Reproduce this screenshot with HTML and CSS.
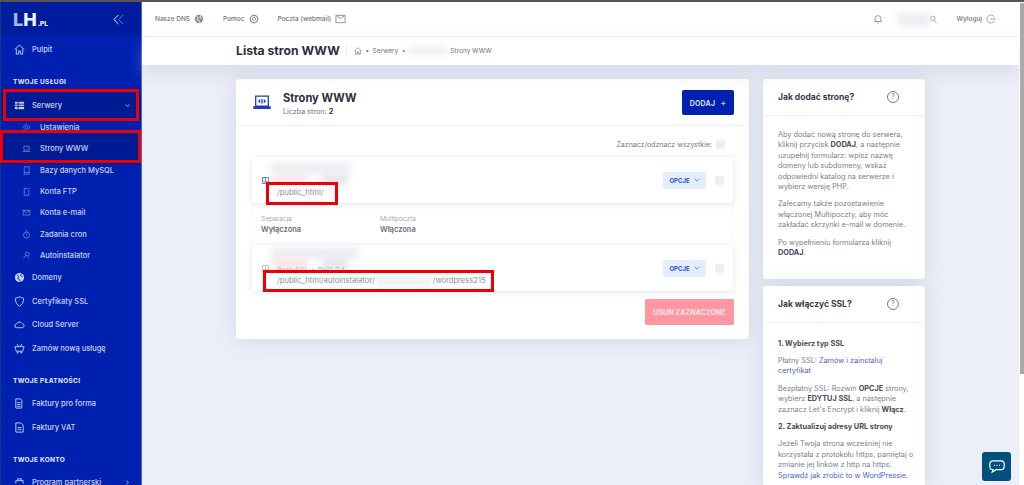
FILE: index.html
```html
<!DOCTYPE html>
<html lang="pl">
<head>
    <meta charset="UTF-8">
    <meta name="viewport" content="width=device-width, initial-scale=1.0">
    <title>Lista stron WWW</title>
    <link rel="stylesheet" href="styles.css">
</head>
<body>
    <div class="topstrip"></div>
    <div class="app">
        <!-- menu boczne -->
        <aside class="sidebar">
            <div class="brand">
                <span class="logo"><span class="logo-l">L</span>H<small>.PL</small></span>
                <svg class="collapse" viewBox="0 0 12 12"><path d="M6 1 1 6l5 5" stroke="#fff"/><path d="M11 1 6 6l5 5" stroke="#6f80d8"/></svg>
            </div>
            <nav class="nav">
                <a class="item"><svg class="ico" viewBox="0 0 12 12"><path d="M1 6 6 1l5 5M2.5 5v6H5V7.500h2V11h2.500V5"/></svg>Pulpit</a>

                <h4>TWOJE USŁUGI</h4>
                <a class="item open"><svg class="ico" viewBox="0 0 12 12"><path class="solid" d="M1 2h10v8H1z"/><path d="M1 4.500h10M1 7h10M4.500 2v8" stroke="#00188f"/></svg>Serwery<svg class="arrow" viewBox="0 0 8 8"><path d="m2 3 2 2 2-2"/></svg></a>
                <a class="sub"><svg class="ico" viewBox="0 0 12 12"><circle cx="6" cy="6" r="1.800"/><circle cx="6" cy="6" r="4.200" stroke-dasharray="2 1"/></svg>Ustawienia</a>
                <a class="sub current"><svg class="ico" viewBox="0 0 12 12"><path d="M2.500 3h7v5h-7zM1 10h10"/></svg>Strony WWW</a>
                <a class="sub"><svg class="ico" viewBox="0 0 12 12"><path d="M3 1h6.500v10H3zM3 8.500h6.500"/></svg>Bazy danych MySQL</a>
                <a class="sub"><svg class="ico" viewBox="0 0 12 12"><path d="M7.500 2H3v9h6V4M9.500 1v2"/></svg>Konta FTP</a>
                <a class="sub"><svg class="ico" viewBox="0 0 12 12"><path d="M1.500 3h9v6.500h-9zM1.500 3 6 6.500 10.500 3"/></svg>Konta e-mail</a>
                <a class="sub"><svg class="ico" viewBox="0 0 12 12"><circle cx="6" cy="6.800" r="4"/><path d="M6 4.500V7M4.500 1.200h3"/></svg>Zadania cron</a>
                <a class="sub"><svg class="ico" viewBox="0 0 12 12"><circle cx="7" cy="4" r="2.500"/><path d="M5 6 2 10M8 7l2 3"/></svg>Autoinstalator</a>
                <a class="item"><svg class="ico" viewBox="0 0 12 12"><circle class="solid" cx="6" cy="6" r="5"/><path d="M3 3l2 1.500L4 7l2 1 1 2.500M8 1.800 7 4l2.500 1.500" stroke="#0020b0"/></svg>Domeny</a>
                <a class="item"><svg class="ico" viewBox="0 0 12 12"><path d="M6 1l4.500 1.500C10.500 7 9 9.500 6 11 3 9.500 1.500 7 1.500 2.500z"/></svg>Certyfikaty SSL</a>
                <a class="item"><svg class="ico" viewBox="0 0 12 12"><path d="M3 9.500a2 2 0 0 1-.3-4A3.500 3.500 0 0 1 9 5a2.300 2.300 0 0 1 .2 4.500z"/></svg>Cloud Server</a>
                <a class="item"><svg class="ico" viewBox="0 0 12 12"><path d="M1 4h10L9.500 9h-7zM3.500 1 5 4M8.500 1 7 4"/><circle cx="4" cy="10.500" r=".6"/><circle cx="8" cy="10.500" r=".6"/></svg>Zamów nową usługę</a>

                <h4 class="next">TWOJE PŁATNOŚCI</h4>
                <a class="item"><svg class="ico" viewBox="0 0 12 12"><path d="M7 1H2v10h6.500V2.500zM3.500 5H7M3.500 7H7M3.500 9H7"/></svg>Faktury pro forma</a>
                <a class="item"><svg class="ico" viewBox="0 0 12 12"><path d="M7.500 1H2v10h8V3.500zM4 6h4M4 8h4"/></svg>Faktury VAT</a>

                <h4 class="next">TWOJE KONTO</h4>
                <a class="item"><svg class="ico" viewBox="0 0 12 12"><path d="M2 7V4h8v3M4 4V2h4v2"/></svg>Program partnerski<svg class="arrow" viewBox="0 0 8 8"><path d="m3 2 2 2-2 2"/></svg></a>
            </nav>
        </aside>

        <div class="main">
            <header class="topbar">
                <a class="toplink">Nasze DNS<svg viewBox="0 0 12 12"><circle class="fill" cx="6" cy="6" r="5"/><path d="M3 3l2 1.500L4 7l2 1 1 2.500M8 1.800 7 4l2.500 1.500" stroke="#fff"/></svg></a>
                <a class="toplink">Pomoc<svg viewBox="0 0 12 12"><circle cx="6" cy="6" r="4.500" stroke-width="1.500"/><circle cx="6" cy="6" r="2"/></svg></a>
                <a class="toplink">Poczta (webmail)<svg class="wide" viewBox="0 0 12 10"><path d="M1 1h10v8H1zM1 1l5 3.500L11 1"/></svg></a>
                <div class="topright">
                    <svg class="bell" viewBox="0 0 12 12"><path d="M2.500 9V5.500a3.500 3.500 0 0 1 7 0V9zM1.500 9h9M5 11h2"/></svg>
                    <span class="user"><i class="blur"></i><svg viewBox="0 0 12 12"><circle cx="5" cy="4.500" r="3"/><path d="m7 7 3 4"/></svg></span>
                    <a class="toplink out">Wyloguj<svg viewBox="0 0 12 12"><path d="M10 3.500a4.800 4.800 0 1 0 0 5M5 6h6.500"/></svg></a>
                </div>
            </header>

            <div class="titlebar">
                <h1>Lista stron WWW</h1>
                <div class="crumbs">
                    <svg viewBox="0 0 12 12"><path d="M1 6 6 1l5 5M2.500 5v6H5V7.500h2V11h2.500V5"/></svg>
                    <span>•</span><span>Serwery</span><span>•</span><i class="blur"></i><span>Strony WWW</span>
                </div>
            </div>

            <div class="content">
                <section class="card sites">
                    <div class="cardhead">
                        <svg class="laptop" viewBox="0 0 20 16"><path d="M3 1h14v11H3zM1 13h18v1.500H1zM8 5 6.500 6.500 8 8M12 5l1.500 1.500L12 8M10 4v5"/></svg>
                        <div class="headtext">
                            <h2>Strony WWW</h2>
                            <p>Liczba stron: <b>2</b></p>
                        </div>
                        <button class="add">DODAJ<span>+</span></button>
                    </div>
                    <div class="cardbody">
                        <label class="selectall">Zaznacz/odznacz wszystkie:<i class="check"></i></label>

                        <div class="site first">
                            <i class="blur name"></i>
                            <i class="blur tone pink"></i>
                            <i class="blur tone grey"></i>
                            <svg class="siteico" viewBox="0 0 12 12"><path d="M2 2h8v6H2zM1 10h10M6 2v6"/></svg>
                            <div class="siteinfo">
                                <span class="path">/public_html/</span>
                            </div>
                            <button class="opts">OPCJE<svg viewBox="0 0 10 6"><path d="m1 1 4 4 4-4"/></svg></button>
                            <i class="check"></i>
                        </div>
                        <div class="details">
                            <div><small>Separacja</small><b>Wyłączona</b></div>
                            <div><small>Multipoczta</small><b>Włączona</b></div>
                        </div>
                        <div class="site second">
                            <i class="blur name"></i>
                            <i class="blur tone pink"></i>
                            <i class="blur tone grey"></i>
                            <svg class="siteico dim" viewBox="0 0 12 12"><path d="M2 2h8v6H2zM1 10h10M6 2v6"/></svg>
                            <div class="siteinfo">
                                <span class="ssl"><em>Brak SSL</em> • PHP 7.4</span>
                                <span class="path">/public_html/autoinstalator/<i class="blur gap"></i>/wordpress215</span>
                            </div>
                            <button class="opts">OPCJE<svg viewBox="0 0 10 6"><path d="m1 1 4 4 4-4"/></svg></button>
                            <i class="check"></i>
                        </div>
                        <div class="actions"><button class="remove">USUŃ ZAZNACZONE</button></div>
                    </div>
                </section>

                <aside class="help">
                    <section class="card">
                        <div class="helphead"><h3>Jak dodać stronę?</h3><span class="q">?</span></div>
                        <div class="helpbody">
                            <p>Aby dodać nową stronę do serwera, kliknij przycisk <b>DODAJ</b>, a następnie uzupełnij formularz: wpisz nazwę domeny lub subdomeny, wskaż odpowiedni katalog na serwerze i wybierz wersję PHP.</p>
                            <p>Zalecamy także pozostawienie włączonej Multipoczty, aby móc zakładać skrzynki e-mail w domenie.</p>
                            <p>Po wypełnieniu formularza kliknij <b>DODAJ</b>.</p>
                        </div>
                    </section>
                    <section class="card">
                        <div class="helphead"><h3>Jak włączyć SSL?</h3><span class="q">?</span></div>
                        <div class="helpbody">
                            <p><b>1. Wybierz typ SSL</b></p>
                            <p>Płatny SSL: <a>Zamów i zainstaluj certyfikat</a></p>
                            <p>Bezpłatny SSL: Rozwiń <b>OPCJE</b> strony, wybierz <b>EDYTUJ SSL</b>, a następnie zaznacz Let's Encrypt i kliknij <b>Włącz</b>.</p>
                            <p><b>2. Zaktualizuj adresy URL strony</b></p>
                            <p>Jeżeli Twoja strona wcześniej nie korzystała z protokołu https, pamiętaj o zmianie jej linków z http na https. <a>Sprawdź jak zrobić to w WordPressie.</a></p>
                        </div>
                    </section>
                </aside>
            </div>
        </div>
        <div class="scrollbar"><div class="thumb"></div></div>
    </div>

    <!-- czerwone ramki z adnotacji -->
    <div class="mark m1"></div>
    <div class="mark m2"></div>
    <div class="mark m3"></div>
    <div class="mark m4"></div>

    <button class="chat"><svg viewBox="0 0 20 16"><path d="M5 1h10a4 4 0 0 1 4 4v3a4 4 0 0 1-4 4H9l-5 3 1-3a4 4 0 0 1-4-4V5a4 4 0 0 1 4-4z"/><path d="M6.500 6.500h1M9.500 6.500h1M12.500 6.500h1"/></svg></button>
</body>
</html>
```

FILE: styles.css
```css
html, body {
    margin: 0;
    height: 485px;
    overflow: hidden;
}

body {
    font-family: Inter, "Open Sans", sans-serif;
    color: #2d2d40;
    background: #eceff8;
}

svg {
    fill: none;
    stroke: currentColor;
    stroke-width: 1;
}

button {
    font-family: inherit;
    border: none;
}

.topstrip {
    height: 2px;
    background: #555;
}

.app {
    display: flex;
    height: 483px;
}

/* sidebar */
.sidebar {
    width: 142px;
    flex: none;
    background: #0020b0;
    border-right: 1px solid #4a63d8;
    border-left: 1px solid #0a3a8a;
    box-sizing: border-box;
    color: #ccd3f3;
    overflow: hidden;
}

.brand {
    height: 34px;
    background: #001c9e;
    display: flex;
    align-items: center;
    justify-content: space-between;
    padding: 0 17px 0 12px;
}

.logo {
    font-size: 18px;
    font-weight: 800;
    color: #f2f4fd;
}

.logo-l {
    color: #a9b5ec;
}

.logo small {
    font-size: 6.5px;
    margin-left: 1px;
}

.collapse {
    width: 11px;
    height: 11px;
}

.nav {
    padding-top: 1.5px;
}

.nav h4 {
    margin: 0;
    padding: 15px 0 0 12px;
    height: 17.5px;
    line-height: 13px;
    font-size: 6.5px;
    font-weight: 700;
    letter-spacing: .3px;
    color: #e8ecfb;
}

.nav h4.next {
    padding-top: 14.5px;
}

.nav h4.next:nth-last-of-type(1) {
    padding-top: 15px;
    height: 17px;
}

.item, .sub {
    display: flex;
    align-items: center;
    font-size: 7.5px;
    font-weight: 500;
}

.item {
    height: 23.5px;
    padding-left: 13px;
}

.item .ico {
    width: 11px;
    height: 11px;
    margin-right: 7px;
    flex: none;
}

.item.open {
    background: #001a94;
    box-shadow: 0 2px 0 #001a94, 0 -1px 0 #001a94;
}

.sub {
    height: 21.3px;
    padding-left: 21px;
}

.sub .ico {
    width: 9px;
    height: 9px;
    margin-right: 9px;
    opacity: .6;
    flex: none;
}

.sub.current {
    background: #001a94;
    box-shadow: 0 -4px 0 #001a94, 0 4px 0 #001a94;
}

.ico .solid {
    fill: #ccd3f3;
    stroke: none;
}

.arrow {
    width: 7px;
    height: 7px;
    margin-left: auto;
    margin-right: 10px;
}

/* top */
.main {
    flex: 1;
    min-width: 0;
}

.topbar {
    height: 34px;
    background: #fff;
    border-bottom: 1px solid #eef0f6;
    display: flex;
    align-items: center;
    padding: 0 0 0 13px;
    gap: 19px;
}

.toplink {
    display: flex;
    align-items: center;
    gap: 4px;
    font-size: 6.5px;
    font-weight: 500;
    color: #6f7282;
    white-space: nowrap;
}

.toplink svg {
    width: 10px;
    height: 10px;
    color: #8a8d9c;
}

.toplink svg.wide {
    width: 11px;
}

.toplink .fill {
    fill: #8a8d9c;
    stroke: none;
}

.topright {
    margin-left: auto;
    display: flex;
    align-items: center;
    margin-right: 23px;
    color: #8a8d9c;
}

.bell {
    width: 10px;
    height: 10px;
}

.user {
    display: flex;
    align-items: center;
    margin: 0 19px 0 14px;
}

.user svg {
    width: 9px;
    height: 9px;
    margin-left: -1px;
}

.user .blur {
    width: 33px;
    height: 13px;
}

.blur {
    display: block;
    background: #e6e7ec;
    filter: blur(3px);
    opacity: .7;
}

.titlebar {
    height: 28px;
    background: #fff;
    display: flex;
    align-items: center;
    padding-left: 94px;
    box-shadow: 0 8px 16px rgba(180, 185, 215, .35);
    position: relative;
}

.titlebar h1 {
    margin: 0;
    font-size: 12.2px;
    font-weight: 700;
    padding-right: 6px;
    border-right: 1px solid #eee;
    line-height: 14px;
}

.crumbs {
    display: flex;
    align-items: center;
    gap: 3.5px;
    margin-left: 7px;
    font-size: 6.5px;
    color: #6f7282;
}

.crumbs svg {
    width: 8px;
    height: 8px;
}

.crumbs .blur {
    width: 38px;
    height: 8px;
}

/* tresc */
.content {
    display: flex;
    gap: 14px;
    padding: 14px 0 0 94px;
    align-items: flex-start;
}

.card {
    background: #fff;
    border-radius: 3px;
    box-shadow: 0 0 20px rgba(160, 165, 200, .35);
}

.sites {
    width: 513px;
    height: 260px;
}

.cardhead {
    height: 46px;
    border-bottom: 1px solid #f0f1f6;
    display: flex;
    align-items: center;
    padding: 0 15px 0 17px;
}

.laptop {
    width: 18px;
    height: 15px;
    color: #1f3cc0;
    margin-right: 12px;
    stroke-width: 1.4;
}

.headtext {
    flex: 1;
    padding-top: 3px;
}

.headtext h2 {
    margin: 0 0 2px;
    font-size: 11.1px;
    font-weight: 700;
    line-height: 14px;
}

.headtext p {
    margin: 0;
    font-size: 7.2px;
    line-height: 10px;
    color: #70727f;
}

.headtext b {
    color: #2d2d40;
}

.add {
    width: 52px;
    height: 25px;
    background: #0020b0;
    border-radius: 2px;
    color: #d5dbf5;
    font-size: 7px;
    font-weight: 700;
    letter-spacing: .2px;
}

.add span {
    margin-left: 5px;
    font-weight: 400;
    font-size: 9px;
}

.cardbody {
    padding: 13px 16px 0;
}

.selectall {
    display: flex;
    justify-content: flex-end;
    align-items: center;
    gap: 4px;
    height: 10px;
    font-size: 7px;
    color: #777986;
    padding-right: 8px;
    margin-bottom: 8px;
}

.check {
    display: block;
    flex: none;
    width: 9px;
    height: 9px;
    background: #eceef5;
    border-radius: 2px;
}

.site {
    height: 46px;
    display: flex;
    align-items: center;
    padding: 0 9px 0 9px;
    border-radius: 2px;
    box-shadow: 0 1px 6px rgba(170, 175, 205, .35);
    position: relative;
}

/* zamazane dane w wierszach stron */
.name, .tone {
    position: absolute;
}

.name {
    left: 19px;
    width: 80px;
}

.first .name {
    top: 5px;
    height: 13px;
}

.second .name {
    top: 2px;
    height: 12px;
    width: 88px;
}

.tone {
    height: 10px;
}

.tone.pink {
    left: 20px;
    width: 36px;
    background: #f8dde0;
}

.tone.grey {
    left: 70px;
    width: 26px;
    background: #dcdde3;
}

.first .tone {
    top: 18px;
}

.second .tone {
    top: 13px;
    height: 12px;
}

.siteico {
    width: 9px;
    height: 9px;
    flex: none;
    color: #3c55c8;
}

.siteico.dim {
    color: #a8abb8;
}

.siteinfo {
    flex: 1;
    display: flex;
    flex-direction: column;
    justify-content: flex-end;
    align-items: flex-start;
    height: 100%;
    padding: 0 0 5px 7px;
    box-sizing: border-box;
}

.path {
    display: flex;
    font-size: 7.6px;
    color: #8b8d9a;
    line-height: 11px;
}

.gap {
    width: 58px;
    height: 8px;
    margin-top: 2px;
}

.ssl {
    font-size: 7.5px;
    color: #b9bbc5;
    line-height: 8px;
    position: relative;
}

.ssl em {
    font-style: normal;
    color: #f5a8b0;
}

.opts {
    width: 43px;
    height: 17px;
    margin-right: 9px;
    background: #e3eefd;
    border-radius: 2px;
    color: #2f4bc7;
    font-size: 6px;
    font-weight: 700;
    display: flex;
    align-items: center;
    justify-content: center;
    gap: 4px;
    padding: 0;
}

.opts svg {
    width: 6px;
    height: 4px;
}

.details {
    height: 42px;
    display: flex;
    padding: 12px 0 0 8px;
    box-sizing: border-box;
    border-left: 1px solid #f8f8fb;
    border-right: 1px solid #f8f8fb;
}

.details div {
    width: 119px;
}

.details small {
    display: block;
    font-size: 6.5px;
    color: #a5a7b3;
    line-height: 9px;
}

.details b {
    display: block;
    font-size: 7.5px;
    font-weight: 600;
    color: #6a6d7e;
    line-height: 12px;
}

.actions {
    display: flex;
    justify-content: flex-end;
    margin: 8px -1px 0 0;
}

.remove {
    width: 89px;
    height: 26px;
    background: #ff96a1;
    border-radius: 2px;
    color: #fde8ea;
    font-size: 7px;
    font-weight: 700;
    letter-spacing: .1px;
    padding: 0;
}

/* kolumna pomocy */
.help {
    width: 162px;
    display: flex;
    flex-direction: column;
    gap: 7px;
}

.help .card:first-child {
    height: 200px;
}

.helphead {
    height: 36px;
    border-bottom: 1px solid #f0f1f6;
    display: flex;
    align-items: center;
    justify-content: space-between;
    padding: 0 26px 0 15px;
}

.helphead h3 {
    margin: 0;
    font-size: 8.5px;
    font-weight: 700;
    color: #3a3a4c;
}

.q {
    width: 10px;
    height: 10px;
    border: 1px solid #77798a;
    border-radius: 50%;
    font-size: 7px;
    line-height: 10px;
    text-align: center;
    color: #77798a;
}

.helpbody {
    padding: 14px 11px 0 15px;
    font-size: 7.3px;
    line-height: 10.4px;
    color: #7c7e8c;
}

.help .card:last-child .helpbody {
    padding-top: 15.5px;
}

.helpbody p {
    margin: 0 0 7px;
}

.helpbody b {
    font-weight: 700;
    color: #4a4b5c;
}

.helpbody a {
    color: #4a63d0;
}

.scrollbar {
    width: 5px;
    flex: none;
    background: #fff;
    padding-left: 1px;
    box-sizing: border-box;
}

.thumb {
    height: 371px;
    margin-top: 1px;
    background: #aaa;
}

.mark {
    position: absolute;
    border: 3px solid #ee0000;
    box-sizing: border-box;
}

.m1 { left: 3px; top: 89px; width: 136px; height: 32px; }
.m2 { left: 0; top: 130px; width: 141px; height: 33px; }
.m3 { left: 266px; top: 182px; width: 72px; height: 23px; }
.m4 { left: 263px; top: 270px; width: 231px; height: 22px; }

.chat {
    position: absolute;
    left: 982px;
    top: 452px;
    width: 29px;
    height: 29px;
    background: #00507f;
    border-radius: 3px;
    color: #fff;
    padding: 0;
    display: flex;
    align-items: center;
    justify-content: center;
}

.chat svg {
    width: 16px;
    height: 13px;
    stroke-width: 1.5;
}
```
